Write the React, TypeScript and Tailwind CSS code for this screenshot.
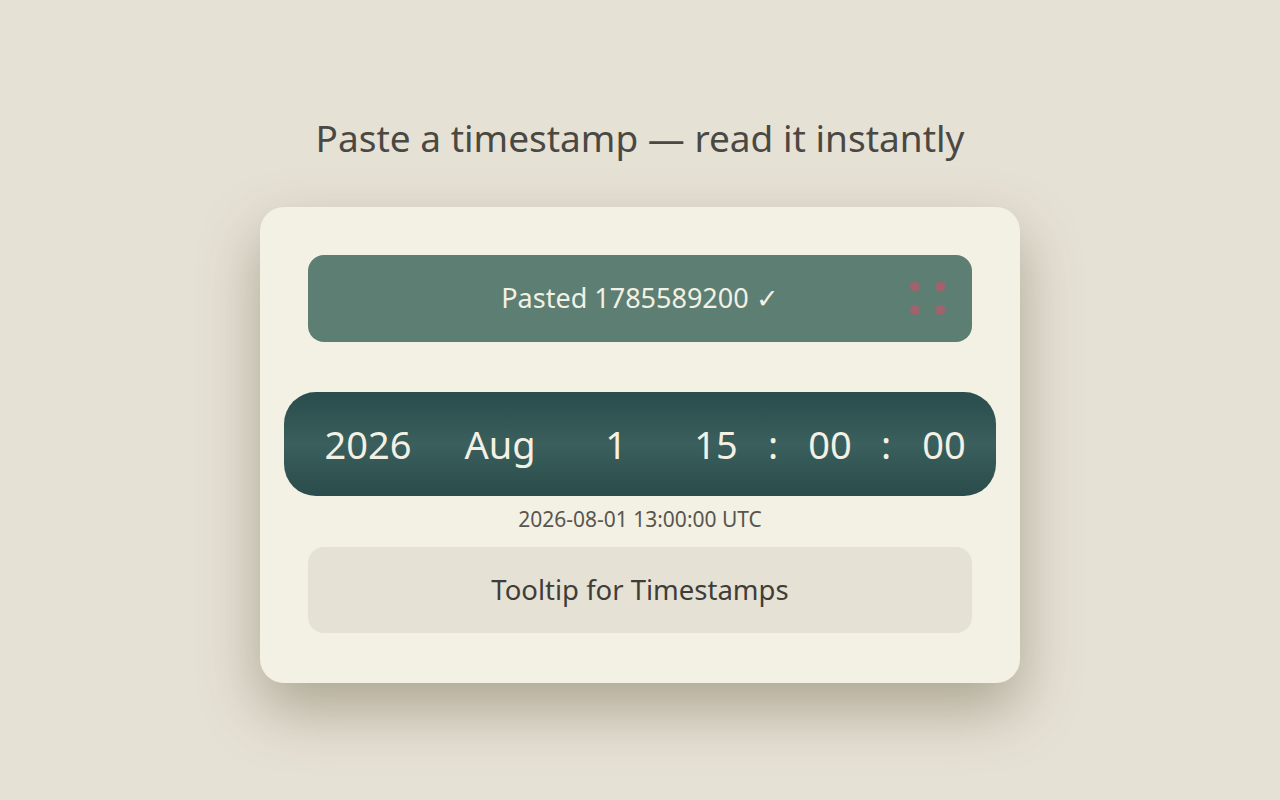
import React from "react";

export default function App() {
  const font = { fontFamily: '"Noto Sans", "Open Sans", sans-serif' };
  const cell = "w-0 flex justify-center whitespace-nowrap";
  return (
    <div
      className="min-h-[800px] w-full bg-[#e6e1d5] flex flex-col items-center"
      style={font}
    >
      <h1 className="mt-[112px] text-[37px] leading-[52px] text-[#4a4843]">
        Paste a timestamp — read it instantly
      </h1>
      <div className="mt-[43px] w-[760px] rounded-[24px] bg-[#f3f0e4] px-[48px] pt-[48px] pb-[50px] shadow-[0_26px_60px_rgba(80,70,40,0.38)] flex flex-col">
        <div className="relative h-[87px] rounded-[16px] bg-[#5d7e72] flex items-center justify-center">
          <span className="text-[27px] text-[#f3f0e4]">Pasted 1785589200 ✓</span>
          <svg
            className="absolute right-[22px] top-[22px]"
            width="44"
            height="42"
            viewBox="0 0 44 42"
          >
            <circle cx="9" cy="9.5" r="5" fill="#a0636d" />
            <circle cx="34.5" cy="9.5" r="5" fill="#a0636d" />
            <circle cx="9" cy="33" r="5" fill="#a0636d" />
            <circle cx="34.5" cy="33" r="5" fill="#a0636d" />
          </svg>
        </div>
        <div className="mt-[50px] -mx-[24px] h-[104px] rounded-[32px] bg-gradient-to-b from-[#294c4c] via-[#3a5f5c] to-[#2a4c4c] flex items-center text-[38px] text-[#f3f0e4]">
          <span className={`${cell} ml-[84px]`}>2026</span>
          <span className={`${cell} ml-[132px]`}>Aug</span>
          <span className={`${cell} ml-[116px]`}>1</span>
          <span className={`${cell} ml-[100px]`}>15</span>
          <span className={`${cell} ml-[57px]`}>:</span>
          <span className={`${cell} ml-[57px]`}>00</span>
          <span className={`${cell} ml-[56px]`}>:</span>
          <span className={`${cell} ml-[58px]`}>00</span>
        </div>
        <div className="mt-[10px] text-center text-[21px] leading-[26px] text-[#58564f]">
          2026-08-01 13:00:00 UTC
        </div>
        <div className="mt-[15px] h-[86px] rounded-[16px] bg-[#e6e1d5] flex items-center justify-center">
          <span className="text-[27.5px] text-[#3f3d38]">Tooltip for Timestamps</span>
        </div>
      </div>
    </div>
  );
}
